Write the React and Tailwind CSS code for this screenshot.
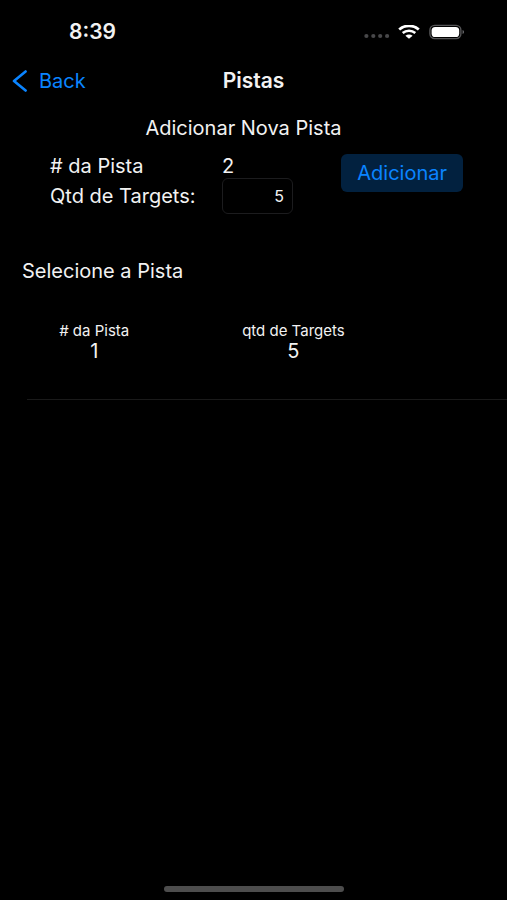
import React, { useState } from 'react';

const StatusBar = () => (
  <div className="flex h-16 items-center justify-between pl-[69px] pr-[42px]">
    <span className="text-[21px] font-semibold">8:39</span>
    <div className="flex items-center">
      <svg width="26" height="6" viewBox="0 0 26 6" fill="#48484a" className="mt-2" aria-hidden="true">
        <circle cx="2.4" cy="3" r="2.1" />
        <circle cx="9.3" cy="3" r="2.1" />
        <circle cx="16.2" cy="3" r="2.1" />
        <circle cx="23.1" cy="3" r="2.1" />
      </svg>
      <svg width="22" height="14" viewBox="0 0 22 14" fill="none" className="ml-2" aria-hidden="true">
        <path d="M1.2 4.6C6.6-0.4 15.4-0.4 20.8 4.6" stroke="#fff" strokeWidth="2.7" />
        <path d="M4.7 8C8.2 4.9 13.8 4.9 17.3 8" stroke="#fff" strokeWidth="2.5" />
        <path d="M11 13.8L7.4 10.7C9.4 9 12.6 9 14.6 10.7Z" fill="#fff" />
      </svg>
      <svg width="36" height="16" viewBox="0 0 36 16" fill="none" className="ml-[9px]" aria-hidden="true">
        <rect x="0.9" y="1.4" width="31" height="13.2" rx="4.8" stroke="#555557" strokeWidth="1.4" />
        <rect x="2.6" y="3" width="27.6" height="10" rx="3.6" fill="#fff" />
        <path d="M33.6 6C35.4 6.6 35.4 9.4 33.6 10Z" fill="#77777b" />
      </svg>
    </div>
  </div>
);

const NavBar = () => (
  <header className="grid h-[34px] grid-cols-3 items-center px-3">
    <a href="#back" className="flex items-center gap-3 text-xl text-[#0a84ff]">
      <svg width="15" height="22" viewBox="0 0 15 22" fill="none" aria-hidden="true">
        <path d="M13.6 1.5L2 11L13.6 20.5" stroke="currentColor" strokeWidth="2.6" strokeLinecap="round" strokeLinejoin="round" />
      </svg>
      Back
    </a>
    <h1 className="text-center text-[21px] font-semibold">Pistas</h1>
  </header>
);

const App = () => {
  const [pistas, setPistas] = useState([{ numero: 1, targets: '5' }]);
  const [targets, setTargets] = useState('5');
  const nextNumero = pistas.length + 1;

  const handleSubmit = (e) => {
    e.preventDefault();
    setPistas(prev => [...prev, { numero: nextNumero, targets }]);
  };

  return (
    <div className="flex min-h-screen flex-col bg-black font-['Inter',sans-serif] text-[#f2f2f2]">
      <StatusBar />
      <NavBar />

      <main className="flex-1">
        <h2 className="mt-[18px] pr-5 text-center text-xl leading-6">Adicionar Nova Pista</h2>

        <form onSubmit={handleSubmit} className="mt-[14px] flex items-start justify-between pl-[50px] pr-11 text-xl leading-6">
          <div className="grid grid-cols-[172px_71px] items-center">
            <span>
              # da Pista
            </span>
            <output>{nextNumero}</output>
            <label htmlFor="targets">Qtd de Targets:</label>
            <input
              id="targets"
              type="text"
              inputMode="numeric"
              value={targets}
              onChange={(e) => setTargets(e.target.value)}
              className="h-9 w-full rounded-md border border-[#1c1c1e] bg-black px-2 text-right text-base"
            />
          </div>
          <button type="submit" className="rounded-md bg-[#02213f] px-4 py-[7px] text-[#0a84ff]">
            Adicionar
          </button>
        </form>

        <h2 className="mt-[45px] pl-[22px] text-xl leading-6">Selecione a Pista</h2>

        <div className="ml-[27px] mt-10 border-b border-[#1a1a1a] pb-9">
          <table className="w-full table-fixed text-center">
            <thead>
              <tr className="text-[15px] leading-4">
                <th className="w-[28%] font-normal">
                  # da Pista
                </th>
                <th className="w-[55%] font-normal">qtd de Targets</th>
                <td />
              </tr>
            </thead>
            <tbody>
              {pistas.map((pista) => (
                <tr key={pista.numero} className="text-xl leading-6">
                  <td>{pista.numero}</td>
                  <td>{pista.targets}</td>
                  <td />
                </tr>
              ))}
            </tbody>
          </table>
        </div>
      </main>

      <footer className="flex justify-center pb-2">
        <div className="h-[6px] w-[180px] rounded-full bg-[#4d4d4d]" />
      </footer>
    </div>
  );
};

export default App;
